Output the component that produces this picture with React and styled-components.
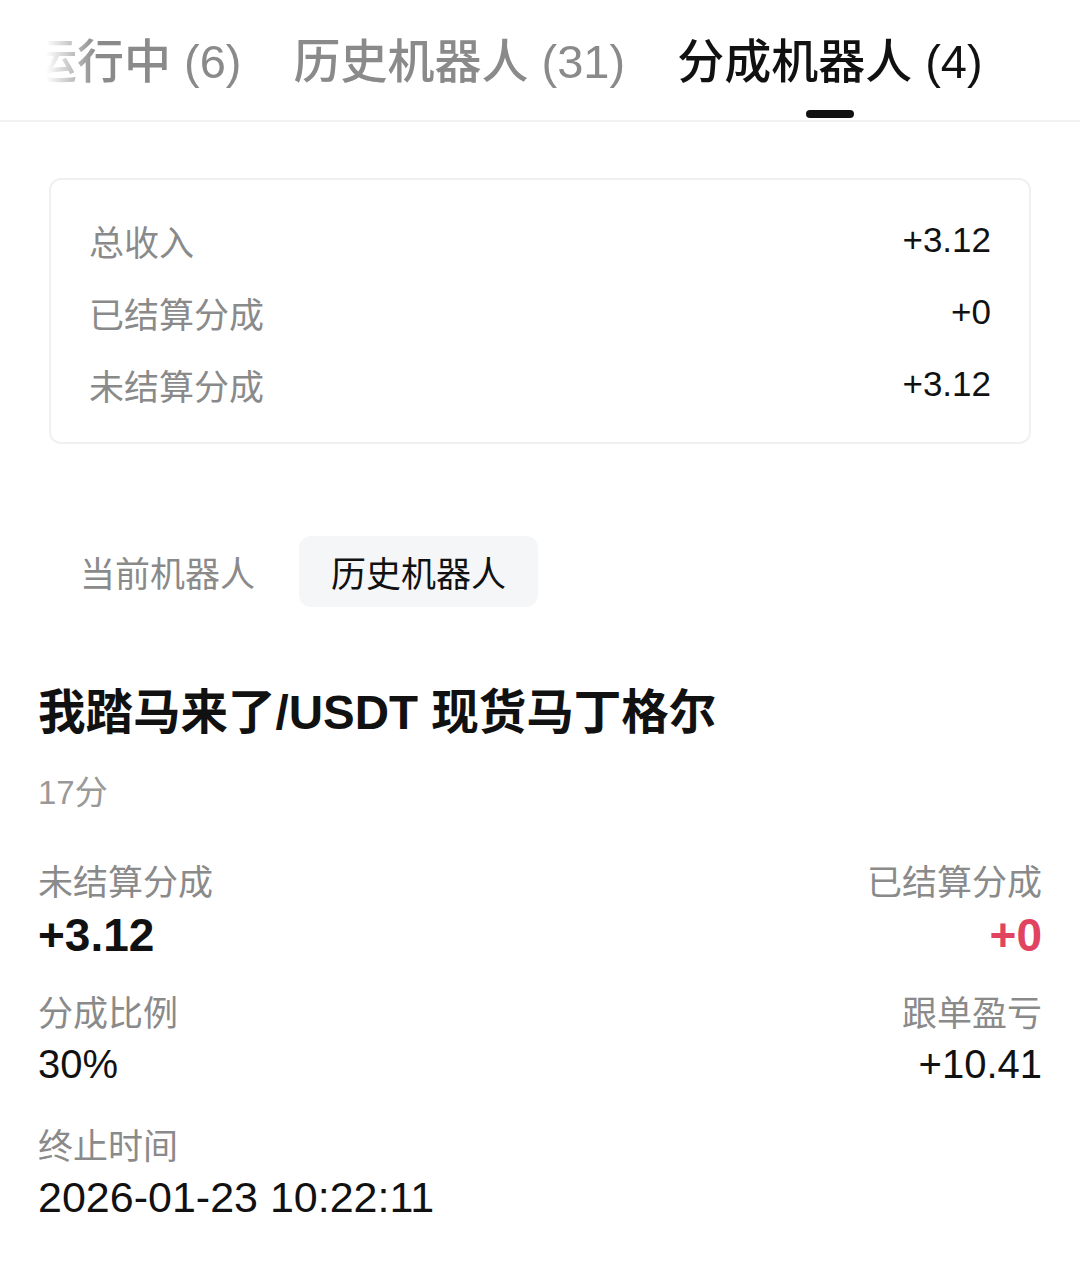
import React, { useState } from "react";
import styled, { createGlobalStyle } from "styled-components";

const GlobalStyle = createGlobalStyle`
  html, body {
    margin: 0;
    padding: 0;
    background: #ffffff;
  }
  body {
    font-family: "Liberation Sans", "Noto Sans CJK SC", sans-serif;
    color: #111111;
  }
`;

const Page = styled.div`
  width: 1080px;
  min-height: 1267px;
  background: #ffffff;
  overflow: hidden;
`;

const TabBar = styled.div`
  height: 120px;
  border-bottom: 2px solid #f2f2f2;
  overflow: hidden;
`;

const TabRow = styled.div`
  display: flex;
  gap: 52px;
  padding-left: 30px;
  white-space: nowrap;
  -webkit-mask-image: linear-gradient(to right, transparent 46px, #000 96px);
  mask-image: linear-gradient(to right, transparent 46px, #000 96px);
`;

const Tab = styled.div`
  display: flex;
  flex-direction: column;
  align-items: center;
  padding-top: 32px;
  cursor: pointer;
`;

const TabLabel = styled.span`
  font-size: 47px;
  line-height: 60px;
  font-weight: 500;
  color: ${(p) => (p.active ? "#111111" : "#8a8a8a")};
`;

const TabIndicator = styled.span`
  margin-top: 18px;
  width: 48px;
  height: 8px;
  border-radius: 4px;
  background: ${(p) => (p.active ? "#111111" : "transparent")};
`;

const SummaryCard = styled.div`
  margin: 56px 49px 0;
  padding: 24px 38px 22px;
  border: 2px solid #f0f0f0;
  border-radius: 12px;
`;

const SummaryRow = styled.div`
  display: flex;
  align-items: center;
  justify-content: space-between;
  height: 72px;
`;

const SummaryLabel = styled.span`
  font-size: 35px;
  color: #8a8a8a;
`;

const SummaryValue = styled.span`
  font-size: 35px;
  color: #111111;
`;

const Segment = styled.div`
  display: flex;
  gap: 12px;
  margin-top: 92px;
  padding-left: 48px;
`;

const SegmentItem = styled.div`
  height: 71px;
  padding: 0 32px;
  display: flex;
  align-items: center;
  border-radius: 12px;
  font-size: 35px;
  cursor: pointer;
  color: ${(p) => (p.active ? "#111111" : "#8a8a8a")};
  background: ${(p) => (p.active ? "#f5f6f7" : "transparent")};
`;

const Robot = styled.div`
  padding: 0 38px;
  margin-top: 76px;
`;

const RobotTitle = styled.h2`
  margin: 0;
  font-size: 47.5px;
  line-height: 60px;
  font-weight: 700;
  color: #111111;
`;

const RobotAge = styled.div`
  margin-top: 28px;
  font-size: 33px;
  line-height: 44px;
  color: #999999;
`;

const StatGrid = styled.div`
  display: grid;
  grid-template-columns: 1fr 1fr;
  row-gap: 27px;
  margin-top: 44px;
`;

const Stat = styled.div`
  display: flex;
  flex-direction: column;
  align-items: ${(p) => (p.right ? "flex-end" : "flex-start")};
`;

const StatLabel = styled.span`
  font-size: 35px;
  line-height: 48px;
  color: #8a8a8a;
`;

const StatValue = styled.span`
  font-size: ${(p) => (p.big ? "46px" : "40px")};
  line-height: ${(p) => (p.big ? "56px" : "52px")};
  font-weight: ${(p) => (p.big ? 700 : 400)};
  color: ${(p) => (p.red ? "#e0445e" : "#111111")};
`;

const EndTime = styled.div`
  display: flex;
  flex-direction: column;
  margin-top: 33px;
`;

const TimeValue = styled.span`
  font-size: 43px;
  line-height: 52px;
  color: #111111;
`;

const tabs = [
  { key: "running", label: "运行中 (6)" },
  { key: "history", label: "历史机器人 (31)" },
  { key: "share", label: "分成机器人 (4)" },
];

const summary = [
  { label: "总收入", value: "+3.12" },
  { label: "已结算分成", value: "+0" },
  { label: "未结算分成", value: "+3.12" },
];

export default function App() {
  const [tab, setTab] = useState("share");
  const [seg, setSeg] = useState("history");

  return (
    <Page>
      <GlobalStyle />
      <TabBar>
        <TabRow>
          {tabs.map((t) => (
            <Tab key={t.key} onClick={() => setTab(t.key)}>
              <TabLabel active={tab === t.key}>{t.label}</TabLabel>
              <TabIndicator active={tab === t.key} />
            </Tab>
          ))}
        </TabRow>
      </TabBar>

      <SummaryCard>
        {summary.map((s) => (
          <SummaryRow key={s.label}>
            <SummaryLabel>{s.label}</SummaryLabel>
            <SummaryValue>{s.value}</SummaryValue>
          </SummaryRow>
        ))}
      </SummaryCard>

      <Segment>
        <SegmentItem active={seg === "current"} onClick={() => setSeg("current")}>
          当前机器人
        </SegmentItem>
        <SegmentItem active={seg === "history"} onClick={() => setSeg("history")}>
          历史机器人
        </SegmentItem>
      </Segment>

      <Robot>
        <RobotTitle>我踏马来了/USDT 现货马丁格尔</RobotTitle>
        <RobotAge>17分</RobotAge>
        <StatGrid>
          <Stat>
            <StatLabel>未结算分成</StatLabel>
            <StatValue big>+3.12</StatValue>
          </Stat>
          <Stat right>
            <StatLabel>已结算分成</StatLabel>
            <StatValue big red>+0</StatValue>
          </Stat>
          <Stat>
            <StatLabel>分成比例</StatLabel>
            <StatValue>30%</StatValue>
          </Stat>
          <Stat right>
            <StatLabel>跟单盈亏</StatLabel>
            <StatValue>+10.41</StatValue>
          </Stat>
        </StatGrid>
        <EndTime>
          <StatLabel>终止时间</StatLabel>
          <TimeValue>2026-01-23 10:22:11</TimeValue>
        </EndTime>
      </Robot>
    </Page>
  );
}
